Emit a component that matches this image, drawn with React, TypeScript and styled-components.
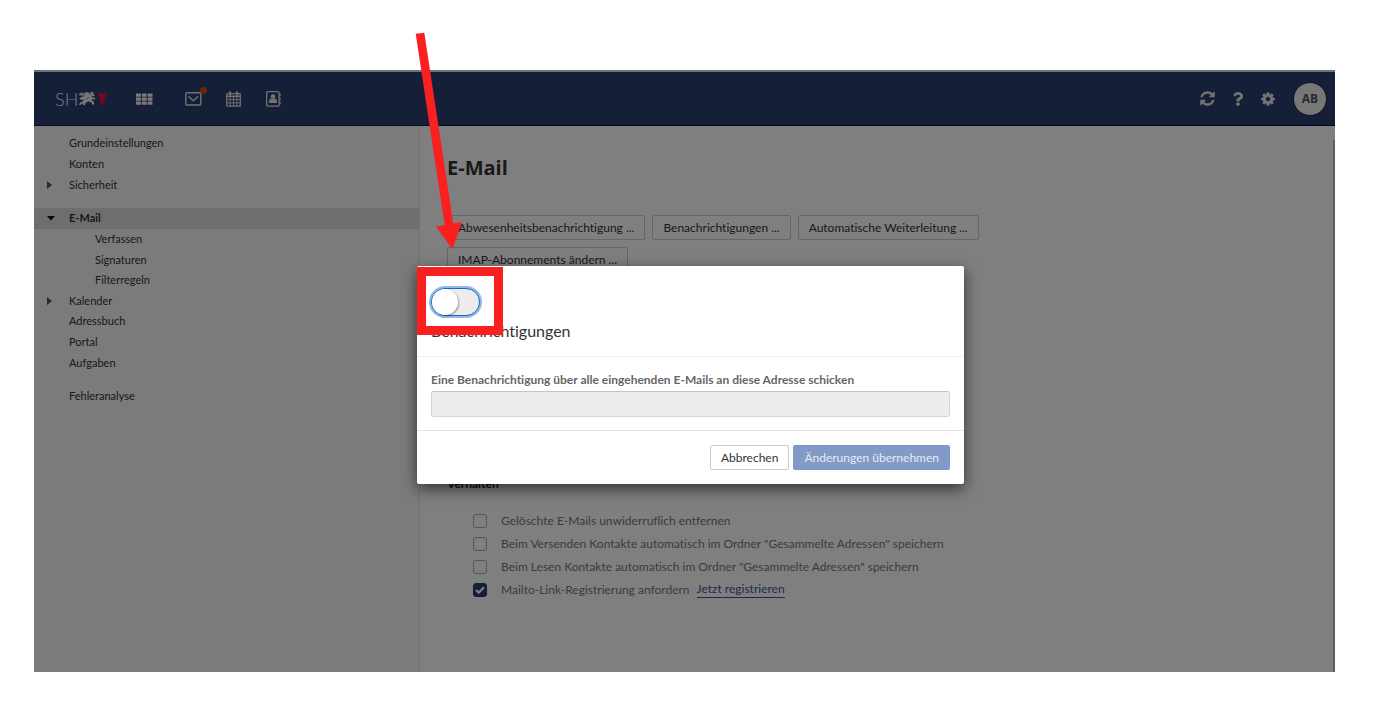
import React from "react";
import styled, { createGlobalStyle, css } from "styled-components";
import { FaQuestion } from "react-icons/fa";

const GlobalStyle = createGlobalStyle`
  *, *::before, *::after { box-sizing: border-box; }
  body {
    margin: 0;
    background: #fff;
    color: #333;
    font-family: Lato, "Open Sans", sans-serif;
    font-size: 12px;
    font-variant-ligatures: none;
    line-height: 20px;
  }
  button, input { font: inherit; font-variant-ligatures: none; }
`;

const Page = styled.div`
  min-height: 100vh;
  display: flex;
  padding: 70px 40px 45px 34px;
`;

const AppWindow = styled.div`
  position: relative;
  flex: 1;
  min-width: 0;
  display: flex;
  flex-direction: column;
  background: #fff;
`;

const TopBar = styled.header`
  display: flex;
  align-items: center;
  height: 56px;
  padding: 0 8px 0 21px;
  background: #2c3e70;
  border-top: 2px solid #dee6fa;
  border-bottom: 1px solid #0c1630;
  color: #e4e4e4;
`;

const Logo = styled.a`
  display: flex;
  align-items: center;
  width: 52px;
  color: #f0f0f0;
  font-weight: 300;
  font-size: 18px;
  text-decoration: none;

  svg { flex-shrink: 0; }
`;

const IconButton = styled.button`
  position: relative;
  display: flex;
  padding: 0;
  border: 0;
  background: none;
  color: inherit;
`;

const AppIcons = styled.nav`
  display: flex;
  align-items: center;
  gap: 24px;
  margin-left: 28px;

  button:first-child { margin-right: 8px; }
`;

const Dot = styled.span`
  position: absolute;
  top: -5px;
  right: -5px;
  width: 7px;
  height: 7px;
  border-radius: 50%;
  background: #e0490c;
`;

const Tools = styled.div`
  display: flex;
  align-items: center;
  gap: 15px;
  margin-left: auto;
`;

const Avatar = styled.button`
  width: 34px;
  height: 34px;
  margin-left: 2px;
  padding: 0;
  border: 1px solid #1a2340;
  border-radius: 50%;
  background: #eee;
  color: #555;
  font-family: "Open Sans", sans-serif;
  font-size: 12px;
  font-weight: 700;
`;

const Body = styled.div`
  flex: 1;
  display: flex;
`;

const Sidebar = styled.nav`
  flex: 0 0 386px;
  display: flex;
  flex-direction: column;
  gap: 13px;
  padding-top: 7px;
  background: #f6f6f6;
  border-right: 1px solid #e4e4e4;
`;

const NavGroup = styled.ul<{ $height: number }>`
  display: grid;
  grid-auto-rows: 1fr;
  height: ${(p) => p.$height}px;
  margin: 0;
  padding: 0;
  list-style: none;
`;

const NavItem = styled.li<{ $active?: boolean; $nested?: boolean }>`
  display: flex;
  align-items: center;
  padding-left: ${(p) => (p.$nested ? 39 : 13)}px;
  ${(p) =>
    p.$active &&
    css`
      background: #ddd;
      font-weight: 700;
    `}
`;

const Caret = styled.span`
  display: flex;
  width: 22px;
  color: #555;
`;

const NavLink = styled.a`
  color: #333;
  font-size: 11px;
  text-decoration: none;
`;

const Content = styled.main`
  flex: 1;
  min-width: 0;
  padding: 28px 27px;
`;

const ScrollTrack = styled.div`
  width: 2px;
  margin-top: 14px;
  background: #bbb;
`;

const Title = styled.h1`
  margin: 0;
  color: #333;
  font-family: "Open Sans", sans-serif;
  font-size: 20px;
  line-height: 28px;
`;

const ButtonRow = styled.div`
  display: flex;
  flex-wrap: wrap;
  gap: 7px;
  max-width: 560px;
  margin-top: 33px;
`;

const Button = styled.button<{ $primary?: boolean }>`
  height: 25px;
  padding: 0 10px;
  border: 1px solid #ccc;
  border-radius: 2px;
  background: #fff;
  color: #333;
  line-height: 20px;
  ${(p) =>
    p.$primary &&
    css`
      border-color: #8096c4;
      background: #8399c6;
      color: #e6ebf4;
    `}
`;

const Options = styled.fieldset`
  margin: 202px 0 0;
  padding: 0;
  border: 0;
`;

const Legend = styled.legend`
  padding: 0;
  font-size: 12px;
  font-weight: 700;
  color: #222;
`;

const OptionList = styled.div`
  display: grid;
  grid-auto-rows: 23px;
  margin-top: 15px;
  padding-left: 26px;
`;

const Option = styled.div`
  display: flex;
  align-items: center;
  color: #777;
`;

const TickBox = styled.span`
  display: grid;
  place-items: center;
  margin-right: 14px;
  > * { grid-area: 1 / 1; }
`;

const Tick = styled.input`
  appearance: none;
  width: 14px;
  height: 14px;
  margin: 0;
  border: 1px solid #aaa;
  border-radius: 3px;
  &:checked {
    border-color: #283c6e;
    background: #283c6e;
  }
`;

const TextLink = styled.a`
  margin-left: 7px;
  color: #3a5692;
  line-height: 16px;
  text-decoration: none;
  border-bottom: 1px solid #3a5692;
`;

const Backdrop = styled.div`
  position: absolute;
  inset: 0;
  display: flex;
  justify-content: center;
  align-items: flex-start;
  padding: 196px 0 0 12px;
  background: rgba(0, 0, 0, 0.5);
`;

const Dialog = styled.div`
  position: relative;
  width: 547px;
  background: #fff;
  border-radius: 2px;
  box-shadow: 0 5px 15px rgba(0, 0, 0, 0.6);
`;

const DialogHeader = styled.div`
  padding: 22px 14px 14px;
  border-bottom: 1px solid #eee;
`;

const Switch = styled.input`
  appearance: none;
  display: block;
  width: 49px;
  height: 28px;
  margin: 0;
  border: 1px solid #1d66c4;
  border-radius: 14px;
  background: #ededed;
  box-shadow: 0 0 0 2px #92b9e6;

  &::before {
    content: "";
    display: block;
    width: 26px;
    height: 26px;
    border-radius: 50%;
    background: #fff;
    box-shadow: 1px 1px 2px rgba(0, 0, 0, 0.35);
  }
`;

const DialogTitle = styled.h2`
  margin: 4px 0 0;
  font-size: 16px;
  font-weight: 400;
  line-height: 22px;
`;

const DialogBody = styled.div`
  padding: 13px 14px;
`;

const FieldLabel = styled.label`
  display: block;
  margin-bottom: 1px;
  color: #666;
  font-size: 12px;
  font-weight: 700;
`;

const TextBox = styled.input`
  display: block;
  width: 100%;
  height: 26px;
  border: 1px solid #d6d6d6;
  border-top-color: #c4c4c4;
  border-radius: 3px;
  background: #ededed;
`;

const DialogFooter = styled.div`
  display: flex;
  justify-content: flex-end;
  gap: 4px;
  padding: 14px;
  border-top: 1px solid #e3e3e3;
`;

const Highlight = styled.div`
  position: absolute;
  top: 1px;
  left: 0;
  width: 86px;
  height: 68px;
  border: 9px solid #fa2020;
  pointer-events: none;
`;

const Arrow = styled.svg`
  position: absolute;
  top: -236px;
  left: -2px;
  overflow: visible;
  pointer-events: none;
`;

const GridIcon = () => (
  <svg width="18" height="12" viewBox="0 0 18 12" fill="#f4f4f4">
    {[0.5, 4.5, 8.5].map((y) =>
      [1, 6.8, 12.6].map((x) => <rect key={`${x}-${y}`} x={x} y={y} width="4.9" height="3.3" rx=".3" />)
    )}
  </svg>
);

const MailIcon = () => (
  <svg width="17" height="14" viewBox="0 0 17 14" fill="none" stroke="currentColor" strokeWidth="1.4">
    <rect x=".8" y=".8" width="15" height="12.2" rx="1" />
    <path d="M3.4 4.2 8.3 8.8l4.9-4.6" />
  </svg>
);

const CalendarIcon = () => (
  <svg width="16" height="16" viewBox="0 0 16 16" fill="none" stroke="currentColor">
    <rect x=".7" y="2.6" width="13.6" height="12.6" rx=".8" strokeWidth="1.2" />
    <path d="M.7 5.3h13.6" strokeWidth="1.6" />
    <path d="M.7 8.6h13.6M.7 11.9h13.6M4.1 6v9M7.5 6v9M10.9 6v9" strokeWidth=".9" />
    <path d="M4.1 1.4v2M10.9 1.4v2" strokeWidth="2.2" strokeLinecap="round" />
  </svg>
);

const ContactsIcon = () => (
  <svg width="16" height="16" viewBox="0 0 16 16">
    <rect x=".7" y=".7" width="12.4" height="14.4" rx="1.2" fill="none" stroke="currentColor" strokeWidth="1.3" />
    <path d="M14 2v3M14 6.3v3M14 10.6v3" stroke="currentColor" strokeWidth="1.2" />
    <circle cx="7" cy="5.6" r="2.4" fill="currentColor" />
    <path d="M3.1 12V9.9c0-1.5 1-2.3 2.1-2.4 1 .9 2.6.9 3.6 0 1.1.1 2.1.9 2.1 2.4V12z" fill="currentColor" />
  </svg>
);

const RefreshIcon = () => (
  <svg width="17" height="17" viewBox="0 0 1792 1792" fill="currentColor">
    <path d="M1639 1056q0 5-1 7-64 268-268 434.5t-478 166.5q-146 0-282.5-55t-243.5-157l-129 129q-19 19-45 19t-45-19-19-45v-448q0-26 19-45t45-19h448q26 0 45 19t19 45-19 45l-137 137q71 66 161 102t187 36q134 0 250-65t186-179q11-17 53-117 8-23 30-23h192q13 0 22.5 9.5t9.5 22.5zm25-800v448q0 26-19 45t-45 19h-448q-26 0-45-19t-19-45 19-45l138-138q-148-137-349-137-134 0-250 65t-186 179q-11 17-53 117-8 23-30 23h-199q-13 0-22.5-9.5t-9.5-22.5v-7q65-268 270-434.5t480-166.5q146 0 284 55.5t245 156.5l130-129q19-19 45-19t45 19 19 45z" />
  </svg>
);

const GearIcon = () => (
  <svg width="16" height="16" viewBox="0 0 1792 1792" fill="currentColor">
    <path d="M1152 896q0-106-75-181t-181-75-181 75-75 181 75 181 181 75 181-75 75-181zm512-109v222q0 12-8 23t-20 13l-185 28q-19 54-39 91 35 50 107 138 10 12 10 25t-9 23q-27 37-99 108t-94 71q-12 0-26-9l-138-108q-44 23-91 38-16 136-29 186-7 28-36 28h-222q-14 0-24.5-8.5t-11.5-21.5l-28-184q-49-16-90-37l-141 107q-10 9-25 9-14 0-25-11-126-114-165-168-7-10-7-23 0-12 8-23 15-21 51-66.5t54-70.5q-27-50-41-99l-183-27q-13-2-21-12.5t-8-23.5v-222q0-12 8-23t19-13l186-28q14-46 39-92-40-57-107-138-10-12-10-24 0-10 9-23 26-36 98.5-107.5t94.5-71.5q13 0 26 10l138 107q44-23 91-38 16-136 29-186 7-28 36-28h222q14 0 24.5 8.5t11.5 21.5l28 184q49 16 90 37l142-107q9-9 24-9 13 0 25 10 129 119 165 170 7 8 7 22 0 12-8 23-15 21-51 66.5t-54 70.5q26 50 41 98l183 28q13 2 21 12.5t8 23.5z" />
  </svg>
);

const Emblem = () => (
  <svg width="30" height="16" viewBox="0 0 30 16">
    <path
      d="M1.5 2.500 4 1.500 6.500 2.800 8 1l2.500.4 1 1.400L13.500.8l2.500.7-1 1.200 1.800 1-.4 1.600-2.200-.3-.6 1.500 2.400-.3 1.400 1.500-1 1-1.800-.6-1 1.300 2.200 1.200.4 2.700-1.900.4-.6-2-2.700-1.200-2.400.6-1.200 1.500-.4 1.500-2.400-.2.700-1.500-1.600.4-1.500 1.500-1.400-.8 1.700-2.200 2.400-1 1.200-2.200-2.400 1-1.400-.8L4 8.400 1.300 8l1-1.500L5 5.800 3.600 4.500 1 4.200z"
      fill="#f0f0f0"
    />
    <path d="M3 3.200l4 2M8 8.500l3-2.500M12 3.500l1.500.5" stroke="#2c3e70" strokeWidth=".6" />
    <path
      d="M20 1.500l1.800-.5 1.200 1.700h2.600L26.800 1l1.900.5-.3 2.900-1.600 1.300.8 1.500-.9 3-1 1-.3 2.600-1.200 1.200-1.200-1.200-.3-2.600-1-1-.9-3 .8-1.500-1.400-1.300z"
      fill="#d8123f"
    />
  </svg>
);

const CaretRight = () => (
  <svg width="5" height="8" viewBox="0 0 5 8" fill="currentColor">
    <path d="M0 0v8l5-4z" />
  </svg>
);

const CaretDown = () => (
  <svg width="8" height="5" viewBox="0 0 8 5" fill="#111">
    <path d="M0 0h8L4 4.500z" />
  </svg>
);

type Entry = { label: string; caret?: "right" | "down"; nested?: boolean; active?: boolean };

const groups: { height: number; items: Entry[] }[] = [
  { height: 62, items: [{ label: "Grundeinstellungen" }, { label: "Konten" }, { label: "Sicherheit", caret: "right" }] },
  {
    height: 165,
    items: [
      { label: "E-Mail", caret: "down", active: true },
      { label: "Verfassen", nested: true },
      { label: "Signaturen", nested: true },
      { label: "Filterregeln", nested: true },
      { label: "Kalender", caret: "right" },
      { label: "Adressbuch" },
      { label: "Portal" },
      { label: "Aufgaben" },
    ],
  },
  { height: 20, items: [{ label: "Fehleranalyse" }] },
];

const options = [
  { id: "purge", label: "Gelöschte E-Mails unwiderruflich entfernen" },
  { id: "collect-send", label: 'Beim Versenden Kontakte automatisch im Ordner "Gesammelte Adressen" speichern' },
  { id: "collect-read", label: 'Beim Lesen Kontakte automatisch im Ordner "Gesammelte Adressen" speichern' },
  { id: "mailto", label: "Mailto-Link-Registrierung anfordern", checked: true, link: "Jetzt registrieren" },
];

export default function App() {
  return (
    <Page>
      <GlobalStyle />
      <AppWindow>
        <TopBar>
          <Logo href="#">
            SH
            <Emblem />
          </Logo>
          <AppIcons aria-label="Anwendungen">
            <IconButton aria-label="Alle Anwendungen"><GridIcon /></IconButton>
            <IconButton aria-label="E-Mail"><MailIcon /><Dot /></IconButton>
            <IconButton aria-label="Kalender"><CalendarIcon /></IconButton>
            <IconButton aria-label="Adressbuch"><ContactsIcon /></IconButton>
          </AppIcons>
          <Tools>
            <IconButton aria-label="Aktualisieren"><RefreshIcon /></IconButton>
            <IconButton aria-label="Hilfe"><FaQuestion size={14} /></IconButton>
            <IconButton aria-label="Einstellungen"><GearIcon /></IconButton>
            <Avatar>AB</Avatar>
          </Tools>
        </TopBar>
        <Body>
          <Sidebar aria-label="Einstellungen">
            {groups.map((group) => (
              <NavGroup key={group.items[0].label} $height={group.height}>
                {group.items.map((item) => (
                  <NavItem key={item.label} $active={item.active} $nested={item.nested}>
                    <Caret>
                      {item.caret === "right" && <CaretRight />}
                      {item.caret === "down" && <CaretDown />}
                    </Caret>
                    <NavLink href="#">{item.label}</NavLink>
                  </NavItem>
                ))}
              </NavGroup>
            ))}
          </Sidebar>
          <Content>
            <Title>E-Mail</Title>
            <ButtonRow>
              <Button>Abwesenheitsbenachrichtigung ...</Button>
              <Button>Benachrichtigungen ...</Button>
              <Button>Automatische Weiterleitung ...</Button>
              <Button>IMAP-Abonnements ändern ...</Button>
            </ButtonRow>
            <Options>
              <Legend>Verhalten</Legend>
              <OptionList>
                {options.map((option) => (
                  <Option key={option.id}>
                    <TickBox>
                      <Tick type="checkbox" id={option.id} defaultChecked={option.checked} />
                      {option.checked && (
                        <svg width="10" height="8" viewBox="0 0 10 8" fill="none" stroke="#fff" strokeWidth="2.2" pointerEvents="none">
                          <path d="M1 4l2.700 2.700L9 1.300" />
                        </svg>
                      )}
                    </TickBox>
                    <label htmlFor={option.id}>{option.label}</label>
                    {option.link && <TextLink href="#">{option.link}</TextLink>}
                  </Option>
                ))}
              </OptionList>
            </Options>
          </Content>
          <ScrollTrack />
        </Body>
        <Backdrop>
          <Dialog role="dialog" aria-labelledby="dialog-title">
            <DialogHeader>
              <Switch type="checkbox" role="switch" aria-labelledby="dialog-title" />
              <DialogTitle id="dialog-title">Benachrichtigungen</DialogTitle>
            </DialogHeader>
            <DialogBody>
              <FieldLabel htmlFor="address">
                Eine Benachrichtigung über alle eingehenden E-Mails an diese Adresse schicken
              </FieldLabel>
              <TextBox id="address" type="email" disabled />
            </DialogBody>
            <DialogFooter>
              <Button>Abbrechen</Button>
              <Button $primary>Änderungen übernehmen</Button>
            </DialogFooter>
            <Highlight />
            <Arrow width="50" height="220" viewBox="415 30 50 220" aria-hidden="true">
              <path d="M415.700 33.800 424.300 32.700 453.300 223.500 462 222 452.500 249.500 436 226.500 444.700 225z" fill="#fa2020" />
            </Arrow>
          </Dialog>
        </Backdrop>
      </AppWindow>
    </Page>
  );
}
